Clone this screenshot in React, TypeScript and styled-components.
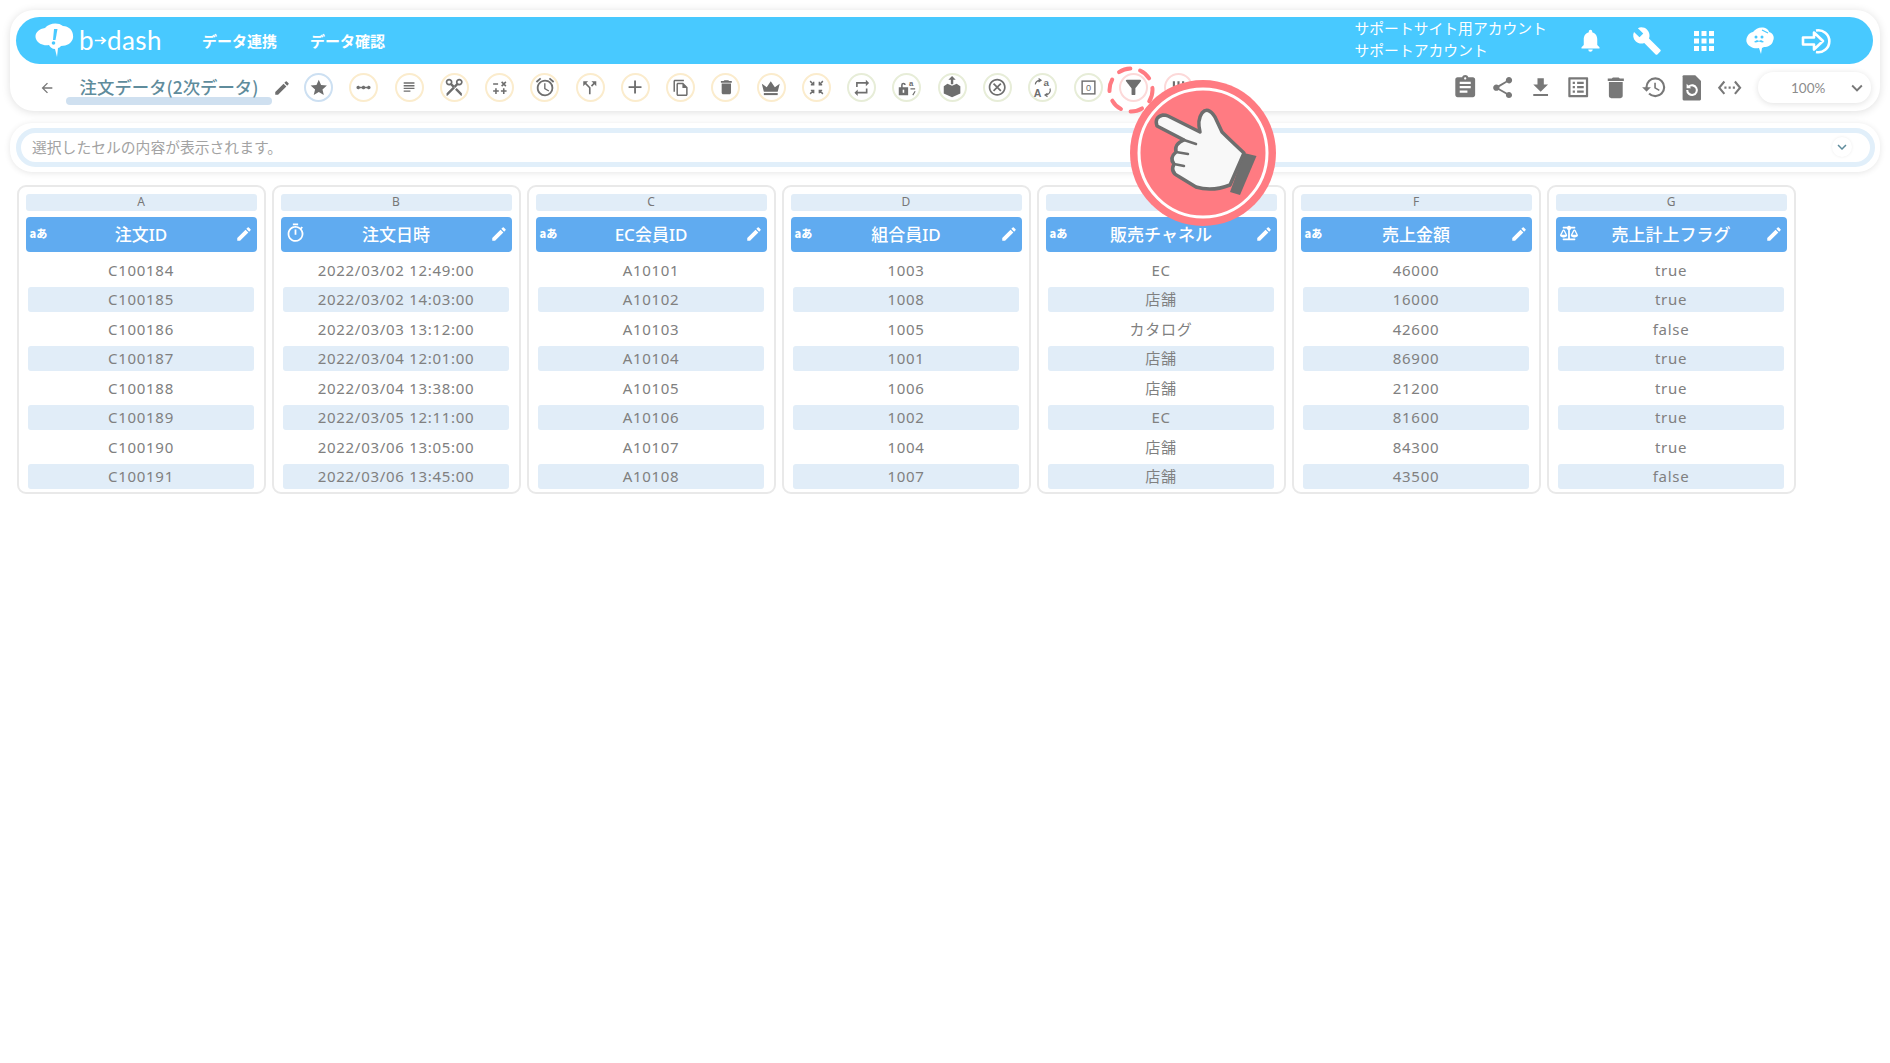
import React from 'react';
import styled, { createGlobalStyle } from 'styled-components';
import {
  MdAdd,
  MdAlarm,
  MdApps,
  MdArrowBack,
  MdAssignment,
  MdBuild,
  MdCallSplit,
  MdContentCut,
  MdDelete,
  MdEdit,
  MdFileDownload,
  MdFilterAlt,
  MdHistory,
  MdKeyboardArrowDown,
  MdLinearScale,
  MdListAlt,
  MdNotifications,
  MdOutlineCancel,
  MdOutlineFileCopy,
  MdOutlineTimer,
  MdRepeat,
  MdSettingsEthernet,
  MdShare,
  MdStar,
  MdSubject
} from 'react-icons/md';
import { FaBalanceScale } from 'react-icons/fa';

const GlobalStyle = createGlobalStyle`
  html, body {
    margin: 0;
    padding: 0;
    background: #fff;
  }
  body {
    font-family: 'Noto Sans', 'Noto Sans CJK JP', sans-serif;
    color: #777;
  }
`;

const Page = styled.div`
  position: relative;
  width: 1890px;
  height: 1063px;
  overflow: hidden;
  padding: 10px 10px 0;
  box-sizing: border-box;
`;

const HeaderCard = styled.header`
  width: 1870px;
  height: 101px;
  box-sizing: border-box;
  padding: 7px 7px 0 6px;
  background: #fff;
  border-radius: 24px;
  box-shadow: 0 1px 8px rgba(0, 0, 0, 0.13);
`;

const BlueBar = styled.div`
  display: flex;
  align-items: center;
  height: 47px;
  padding: 0 28px 0 19px;
  background: #48c9ff;
  border-radius: 24px;
  color: #fff;
`;

const Logo = styled.div`
  display: flex;
  align-items: center;
  width: 167px;
  height: 47px;
`;

const LogoText = styled.span`
  display: flex;
  align-items: center;
  margin-left: 4px;
  font-family: 'Lato', sans-serif;
  font-size: 26px;
  font-weight: 400;
  letter-spacing: 0.4px;
  line-height: 47px;
`;

const NavLink = styled.a`
  margin-right: 33px;
  font-family: 'Noto Sans CJK JP', sans-serif;
  font-size: 15px;
  font-weight: 700;
  white-space: nowrap;
`;

const Account = styled.div`
  width: 192px;
  margin-left: auto;
  margin-right: 16px;
  margin-top: -3px;
  font-family: 'Noto Sans CJK JP', sans-serif;
  font-size: 14.8px;
  font-weight: 400;
  line-height: 22px;
  white-space: nowrap;
`;

const BarIcon = styled.span`
  display: flex;
  align-items: center;
  justify-content: center;
  width: 56.5px;
  height: 47px;
  font-size: ${(props: { size: number }) => props.size}px;
`;

const Toolbar = styled.div`
  display: flex;
  align-items: center;
  height: 47px;
  padding-left: 20px;
  padding-right: 2px;
`;

const BackButton = styled.span`
  display: flex;
  align-items: center;
  justify-content: center;
  width: 22px;
  font-size: 16px;
  color: #777;
`;

const Title = styled.div`
  position: relative;
  width: 206px;
  margin-left: 8px;
  text-align: center;
  font-family: 'Noto Sans CJK JP', sans-serif;
  font-size: 17.4px;
  font-weight: 500;
  line-height: 24px;
  color: #5f8c9c;
  white-space: nowrap;

  &::after {
    content: '';
    position: absolute;
    left: 0;
    right: 0;
    bottom: -5px;
    height: 8px;
    border-radius: 4px;
    background: #cfe0f0;
    z-index: 0;
  }
`;

const TitleText = styled.span`
  position: relative;
  top: -1px;
  z-index: 1;
`;

const TitleEdit = styled.span`
  display: flex;
  justify-content: center;
  width: 18px;
  margin-left: 1px;
  margin-right: 13px;
  font-size: 18px;
  color: #6e6e6e;
`;

const ToolGroup = styled.div`
  display: flex;
  align-items: center;
  gap: 16.28px;
`;

type Tone = 'blue' | 'yellow' | 'green' | 'pink';

const toneColors: Record<Tone, string> = {
  blue: '#cde0f2',
  yellow: '#fbeccd',
  green: '#e7edd8',
  pink: '#fcd9d9'
};

const ToolButton = styled.span<{ tone: Tone }>`
  display: flex;
  align-items: center;
  justify-content: center;
  width: 29px;
  height: 29px;
  box-sizing: border-box;
  border: 2.5px solid ${props => toneColors[props.tone]};
  border-radius: 50%;
  background: #fff;
  font-size: 17px;
  color: #6e6e6e;
`;

const RightTools = styled.div`
  display: flex;
  align-items: center;
  margin-left: auto;
`;

const RightIcon = styled.span`
  display: flex;
  align-items: center;
  justify-content: center;
  width: 37.7px;
  font-size: 23px;
  color: #787878;
`;

const ZoomSelect = styled.div`
  display: flex;
  align-items: center;
  width: 113px;
  height: 31px;
  margin-left: 10px;
  padding-left: 33px;
  box-sizing: border-box;
  border-radius: 16px;
  background: #fff;
  box-shadow: 0 1px 6px rgba(0, 0, 0, 0.12);
  font-family: 'Lato', 'Noto Sans', sans-serif;
  font-size: 13.5px;
  color: #8c8c8c;

  svg {
    margin-left: 21px;
    font-size: 22px;
    color: #787878;
  }
`;

const CellCard = styled.div`
  width: 1870px;
  height: 49px;
  margin-top: 12px;
  padding: 5px 5px 0 6px;
  box-sizing: border-box;
  border-radius: 22px;
  background: #fff;
  box-shadow: 0 1px 6px rgba(0, 0, 0, 0.1);
`;

const CellField = styled.div`
  display: flex;
  align-items: center;
  height: 39px;
  padding: 0 18px 2px 11px;
  box-sizing: border-box;
  border: 5px solid #e1effa;
  border-radius: 20px;
  background: #fff;
  font-family: 'Noto Sans CJK JP', sans-serif;
  font-size: 14.8px;
  color: #a3a3a3;
`;

const CellToggle = styled.span`
  display: flex;
  align-items: center;
  justify-content: center;
  width: 20px;
  height: 20px;
  margin-left: auto;
  border-radius: 50%;
  background: #fff;
  box-shadow: 0 0 3px rgba(0, 0, 0, 0.08);
  font-size: 18px;
  color: #5f8c9c;
`;

const Sheet = styled.div`
  display: flex;
  gap: 6px;
  margin-top: 13px;
  margin-left: 7px;
`;

const Column = styled.section`
  width: 249px;
  box-sizing: border-box;
  padding: 7px 7.5px 1px 6.5px;
  border: 2px solid #e9e9e9;
  border-radius: 9px;
  background: #fff;
`;

const ColumnLetter = styled.div`
  height: 17px;
  border-radius: 3px;
  background: #e1edf8;
  text-align: center;
  font-size: 12px;
  line-height: 15px;
  color: #777;
`;

const ColumnHead = styled.div`
  display: flex;
  align-items: center;
  justify-content: center;
  position: relative;
  height: 35px;
  margin-top: 6px;
  padding-bottom: 3px;
  box-sizing: border-box;
  border-radius: 4px;
  background: #60abf0;
  font-family: 'Noto Sans', 'Noto Sans CJK JP', sans-serif;
  font-size: 17px;
  font-weight: 500;
  color: #fff;
`;

const TypeBadge = styled.span`
  position: absolute;
  left: 4px;
  top: 46%;
  transform: translateY(-50%);
  display: flex;
  align-items: center;
  font-family: 'Noto Sans CJK JP', sans-serif;
  font-size: 11px;
  font-weight: 900;
  white-space: nowrap;
`;

const HeadEdit = styled.span`
  position: absolute;
  right: 4px;
  top: 48%;
  transform: translateY(-50%);
  display: flex;
  font-size: 18px;
`;

const Rows = styled.div`
  margin: 3px -3.5px 0;
`;

const Row = styled.div`
  height: 29.56px;
  padding: 2.5px 6px;
  box-sizing: border-box;
`;

const RowCell = styled.div<{ striped: boolean }>`
  height: 24.56px;
  border-radius: 3px;
  background: ${props => (props.striped ? '#e1edf8' : 'transparent')};
  text-align: center;
  font-size: 15px;
  letter-spacing: 0.7px;
  line-height: 24px;
  color: #808080;
`;

const FocusRing = styled.svg`
  position: absolute;
  left: 1107px;
  top: 66px;
  width: 48px;
  height: 48px;
`;

const HandBadge = styled.svg`
  position: absolute;
  left: 1130px;
  top: 80px;
  width: 146px;
  height: 146px;
`;

const SmallGlyph = styled.text`
  font-family: 'Liberation Sans', sans-serif;
  font-weight: 700;
  fill: currentColor;
`;

const CalcIcon = () => (
  <svg width="1em" height="1em" viewBox="0 0 24 24" stroke="currentColor" strokeWidth="2.2" fill="none">
    <path d="M3 7h7M15 4l6 6M21 4l-6 6M3 17h8M7 13v8M14 17h8M18 13v8" />
  </svg>
);

const CrownIcon = () => (
  <svg width="1.15em" height="1.15em" viewBox="0 0 24 24" fill="currentColor">
    <path d="M1 7l6 4.5L12 4l5 7.5L23 7l-2.5 10h-17z" />
    <rect x="3.5" y="18.5" width="17" height="2.5" />
  </svg>
);

const CompressIcon = () => (
  <svg width="1em" height="1em" viewBox="0 0 24 24" stroke="currentColor" strokeWidth="2" fill="none">
    <path d="M3 3l5 5M8 4v4H4M21 3l-5 5M16 4v4h4M3 21l5-5M8 20v-4H4M21 21l-5-5M16 20v-4h4" />
  </svg>
);

const LockIcon = () => (
  <svg width="1.1em" height="1.1em" viewBox="0 0 24 24" fill="currentColor">
    <path d="M1 12h12v10H1zM4 12V9a3 3 0 0 1 6 0h-2a1 1 0 0 0-2 0v3z" />
    <rect x="6" y="15" width="2" height="4" fill="#fff" />
    <SmallGlyph x="14" y="10" fontSize="10">a</SmallGlyph>
    <path d="M16 14h6M22 17l-3 5" stroke="currentColor" strokeWidth="1.5" fill="none" />
  </svg>
);

const BoxIcon = () => (
  <svg width="1.3em" height="1.3em" viewBox="0 0 24 24" fill="currentColor">
    <path d="M3 11l4-2.500 5 2 5-2 4 2.500v8l-9 4-9-4z" />
    <path d="M12 0l4 4h-2.700v5h-2.600V4H8z" />
  </svg>
);

const TranslateIcon = () => (
  <svg width="1.25em" height="1.25em" viewBox="0 0 26 26" fill="currentColor">
    <SmallGlyph x="14" y="11" fontSize="12">a</SmallGlyph>
    <SmallGlyph x="2" y="24" fontSize="13">A</SmallGlyph>
    <path d="M4 9a6 6 0 0 1 6-5M8 2l3 2-3 2M22 14a6 6 0 0 1-5 8M19 20l-3 2 3 2" stroke="currentColor" strokeWidth="1.5" fill="none" />
  </svg>
);

const ZeroBoxIcon = () => (
  <svg width="1em" height="1em" viewBox="0 0 24 24" fill="none">
    <rect x="3" y="3" width="18" height="18" stroke="currentColor" strokeWidth="2" />
    <SmallGlyph x="12" y="17" fontSize="13" textAnchor="middle" style={{ fontWeight: 400 }}>
      0
    </SmallGlyph>
  </svg>
);

const BarsIcon = () => (
  <svg width="1em" height="1em" viewBox="0 0 24 24" fill="currentColor">
    <path d="M4 3h3v8H4zM10.500 3h3v8h-3zM17 3h3v8h-3z" />
  </svg>
);

const DocRestoreIcon = () => (
  <svg width="1.2em" height="1.2em" viewBox="0 0 24 24" fill="currentColor">
    <path d="M5 1h10l5 5v16a1 1 0 0 1-1 1H5a1 1 0 0 1-1-1V2a1 1 0 0 1 1-1z" />
    <path d="M8 14a4.200 4.200 0 1 0 1.400-3.100" stroke="#fff" strokeWidth="1.800" fill="none" />
    <path d="M7.500 8.500v4h4z" fill="#fff" />
  </svg>
);

const LoginIcon = () => (
  <svg width="1em" height="1em" viewBox="0 0 32 28" fill="none" stroke="currentColor" strokeWidth="2.600">
    <path d="M15 3.500A11 11 0 1 1 15 25" />
    <path d="M2 10.500h11V5.500l9 8.500-9 8.500v-5H2z" strokeLinejoin="round" />
  </svg>
);

const FaceIcon = () => (
  <svg width="1em" height="1em" viewBox="0 0 32 32" fill="currentColor">
    <path d="M9 7c3-4 9-6 14-3 1 1 2 2 2 3 4 1 6 5 4 9-1 4-5 6-9 6l-2 1-1 6-2-6c-5 1-10-1-12-5C1 14 4 8 9 7z" />
    <circle cx="12" cy="12" r="1.500" fill="#48c9ff" />
    <circle cx="18" cy="12" r="1.500" fill="#48c9ff" />
    <path d="M10 17c2-2 4-2 5-1 1-1 3-1 5 1-2 1-4 0-5-.5-1 .5-3 1.500-5 .5z" fill="#48c9ff" />
    <path d="M18 5l6 3" stroke="#48c9ff" strokeWidth="1.200" />
  </svg>
);

const CloudLogo = () => (
  <svg width="40" height="36" viewBox="0 0 40 36" fill="#fff">
    <path d="M10 5c4-5 13-6 18-2 6 0 11 5 10 12-1 5-6 8-12 8-1 1-2 2-3 2l-1 9-2-8c-3 0-5-2-6-4C9 23 3 21 1 16-1 11 3 6 10 5z" />
    <path d="M19 6h3.500l-2 11h-2.500z" fill="#48c9ff" />
    <circle cx="18.500" cy="20" r="1.800" fill="#48c9ff" />
  </svg>
);

const LogoArrow = () => (
  <svg width="13" height="11" viewBox="0 0 15 12" fill="none" stroke="#fff" strokeWidth="2">
    <path d="M1 6h12M8.500 2l4.500 4-4.500 4" />
  </svg>
);

const tools: { id: string; tone: Tone; icon: React.ReactNode }[] = [
  { id: 'star', tone: 'blue', icon: <MdStar size="1.15em" /> },
  { id: 'scale', tone: 'yellow', icon: <MdLinearScale /> },
  { id: 'subject', tone: 'yellow', icon: <MdSubject size="0.95em" /> },
  { id: 'cut', tone: 'yellow', icon: <MdContentCut size="1.2em" style={{ transform: 'rotate(90deg)' }} /> },
  { id: 'calc', tone: 'yellow', icon: <CalcIcon /> },
  { id: 'alarm', tone: 'yellow', icon: <MdAlarm size="1.3em" /> },
  { id: 'split', tone: 'yellow', icon: <MdCallSplit size="1.15em" /> },
  { id: 'add', tone: 'yellow', icon: <MdAdd size="1.3em" /> },
  { id: 'copy', tone: 'yellow', icon: <MdOutlineFileCopy size="1.05em" /> },
  { id: 'trash', tone: 'yellow', icon: <MdDelete size="1.1em" /> },
  { id: 'crown', tone: 'yellow', icon: <CrownIcon /> },
  { id: 'compress', tone: 'yellow', icon: <CompressIcon /> },
  { id: 'repeat', tone: 'green', icon: <MdRepeat size="1.15em" /> },
  { id: 'lock', tone: 'green', icon: <LockIcon /> },
  { id: 'box', tone: 'green', icon: <BoxIcon /> },
  { id: 'cancel', tone: 'green', icon: <MdOutlineCancel size="1.2em" /> },
  { id: 'translate', tone: 'green', icon: <TranslateIcon /> },
  { id: 'zero', tone: 'green', icon: <ZeroBoxIcon /> },
  { id: 'filter', tone: 'pink', icon: <MdFilterAlt size="1.35em" /> },
  { id: 'bars', tone: 'pink', icon: <BarsIcon /> }
];

const rightTools = [
  <MdAssignment key="a" size="1.15em" />,
  <MdShare key="b" size="1.1em" />,
  <MdFileDownload key="c" size="1.1em" />,
  <MdListAlt key="d" size="1.15em" />,
  <MdDelete key="e" size="1.2em" />,
  <MdHistory key="f" size="1.15em" />,
  <DocRestoreIcon key="g" />,
  <MdSettingsEthernet key="h" size="1.1em" />
];

type HeadIcon = 'text' | 'time' | 'flag';

const columns: { letter: string; name: string; icon: HeadIcon; rows: string[] }[] = [
  {
    letter: 'A',
    name: '注文ID',
    icon: 'text',
    rows: ['C100184', 'C100185', 'C100186', 'C100187', 'C100188', 'C100189', 'C100190', 'C100191']
  },
  {
    letter: 'B',
    name: '注文日時',
    icon: 'time',
    rows: [
      '2022/03/02 12:49:00',
      '2022/03/02 14:03:00',
      '2022/03/03 13:12:00',
      '2022/03/04 12:01:00',
      '2022/03/04 13:38:00',
      '2022/03/05 12:11:00',
      '2022/03/06 13:05:00',
      '2022/03/06 13:45:00'
    ]
  },
  {
    letter: 'C',
    name: 'EC会員ID',
    icon: 'text',
    rows: ['A10101', 'A10102', 'A10103', 'A10104', 'A10105', 'A10106', 'A10107', 'A10108']
  },
  {
    letter: 'D',
    name: '組合員ID',
    icon: 'text',
    rows: ['1003', '1008', '1005', '1001', '1006', '1002', '1004', '1007']
  },
  {
    letter: 'E',
    name: '販売チャネル',
    icon: 'text',
    rows: ['EC', '店舗', 'カタログ', '店舗', '店舗', 'EC', '店舗', '店舗']
  },
  {
    letter: 'F',
    name: '売上金額',
    icon: 'text',
    rows: ['46000', '16000', '42600', '86900', '21200', '81600', '84300', '43500']
  },
  {
    letter: 'G',
    name: '売上計上フラグ',
    icon: 'flag',
    rows: ['true', 'true', 'false', 'true', 'true', 'true', 'true', 'false']
  }
];

const renderHeadIcon = (icon: HeadIcon) => {
  if (icon === 'time') return <MdOutlineTimer size={21} />;
  if (icon === 'flag') return <FaBalanceScale size={18} />;
  return 'aあ';
};

export default function App() {
  return (
    <Page>
      <GlobalStyle />
      <HeaderCard>
        <BlueBar>
          <Logo>
            <CloudLogo />
            <LogoText>
              b<LogoArrow />
              dash
            </LogoText>
          </Logo>
          <NavLink>データ連携</NavLink>
          <NavLink>データ確認</NavLink>
          <Account>
            サポートサイト用アカウント
            <br />
            サポートアカウント
          </Account>
          <BarIcon size={27}>
            <MdNotifications />
          </BarIcon>
          <BarIcon size={30}>
            <MdBuild />
          </BarIcon>
          <BarIcon size={30}>
            <MdApps />
          </BarIcon>
          <BarIcon size={32}>
            <FaceIcon />
          </BarIcon>
          <BarIcon size={32}>
            <LoginIcon />
          </BarIcon>
        </BlueBar>
        <Toolbar>
          <BackButton>
            <MdArrowBack />
          </BackButton>
          <Title>
            <TitleText>注文データ(2次データ)</TitleText>
          </Title>
          <TitleEdit>
            <MdEdit />
          </TitleEdit>
          <ToolGroup>
            {tools.map(tool => (
              <ToolButton key={tool.id} tone={tool.tone}>
                {tool.icon}
              </ToolButton>
            ))}
          </ToolGroup>
          <RightTools>
            {rightTools.map((icon, i) => (
              <RightIcon key={i}>{icon}</RightIcon>
            ))}
            <ZoomSelect>
              100%
              <MdKeyboardArrowDown />
            </ZoomSelect>
          </RightTools>
        </Toolbar>
      </HeaderCard>

      <CellCard>
        <CellField>
          選択したセルの内容が表示されます。
          <CellToggle>
            <MdKeyboardArrowDown />
          </CellToggle>
        </CellField>
      </CellCard>

      <Sheet>
        {columns.map(col => (
          <Column key={col.letter}>
            <ColumnLetter>{col.letter}</ColumnLetter>
            <ColumnHead>
              <TypeBadge>{renderHeadIcon(col.icon)}</TypeBadge>
              {col.name}
              <HeadEdit>
                <MdEdit />
              </HeadEdit>
            </ColumnHead>
            <Rows>
              {col.rows.map((value, i) => (
                <Row key={i}>
                  <RowCell striped={i % 2 === 1}>{value}</RowCell>
                </Row>
              ))}
            </Rows>
          </Column>
        ))}
      </Sheet>

      <FocusRing viewBox="0 0 48 48">
        <circle cx="24" cy="24" r="21.5" fill="none" stroke="#ff7b82" strokeWidth="4" strokeLinecap="round" strokeDasharray="12 10" />
      </FocusRing>

      <HandBadge viewBox="0 0 146 146">
        <circle cx="73" cy="73" r="73" fill="#ff7b82" />
        <circle cx="73" cy="73" r="64" fill="#ff7b82" stroke="#fff" strokeWidth="3" />
        <path d="M114 73l12.500 3L110 115l-10-3z" fill="#6e6e6e" />
        <path
          d="M33 35Q24 37 27 46L54 60Q44 64 46 72Q39 78 44 84Q40 92 48 96L66 107Q82 112 100 105L114 73Q100 60 92 52L85 37Q78 26 72 33Q67 40 70 52L38 36Q36 35 33 35Z"
          fill="#f8f8f8"
          stroke="#6e6e6e"
          strokeWidth="3.5"
          strokeLinejoin="round"
        />
        <path d="M54 60L66 64M46 72L58 74M44 84L54 86" fill="none" stroke="#6e6e6e" strokeWidth="2.5" strokeLinecap="round" />
      </HandBadge>
    </Page>
  );
}
